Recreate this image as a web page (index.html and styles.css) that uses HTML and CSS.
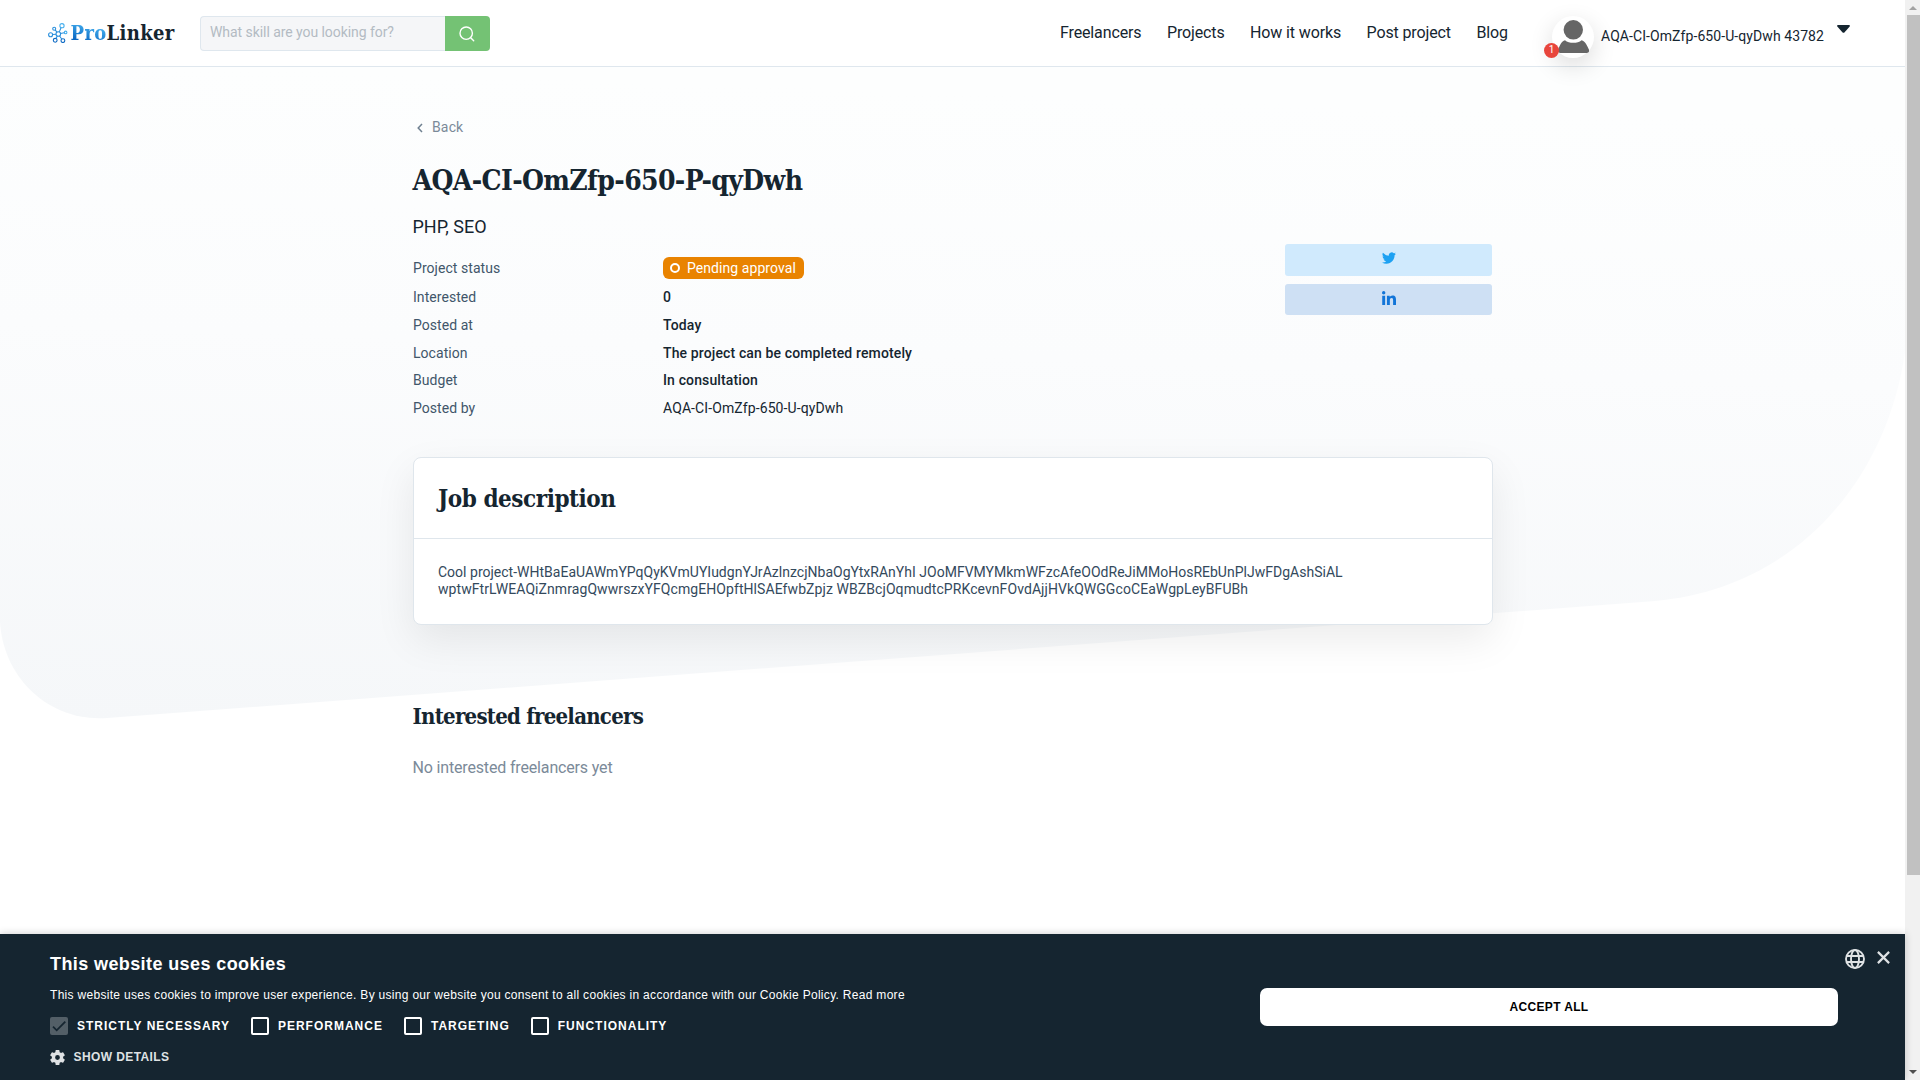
FILE: index.html
```html
<!DOCTYPE html>
<html lang="en">
<head>
<meta charset="utf-8">
<title>AQA-CI-OmZfp-650-P-qyDwh | ProLinker</title>
<link rel="stylesheet" href="styles.css">
</head>
<body>
<div class="page">
  <svg class="backdrop" viewBox="0 0 1905 720" aria-hidden="true">
    <defs><linearGradient id="shade" x1="0.1" y1="0" x2="0" y2="1"><stop offset="0" stop-color="#fdfefe"/><stop offset=".4" stop-color="#fbfcfd"/><stop offset="1" stop-color="#f5f7f9"/></linearGradient></defs>
    <path fill="url(#shade)" d="M0 66H1905V352C1887 478 1798 588 1655 601L107 718C47 722 3 676 0 622Z"/>
  </svg>
  <header class="header">
    <a class="logo">
      <svg class="logo-mark" viewBox="0 0 20 20" fill="none" stroke="#2a8fdc" stroke-width="1.1">
        <circle cx="10.3" cy="11" r="2.3"/><circle cx="2.6" cy="11.7" r="2"/><circle cx="6.2" cy="5.7" r="1.5"/><circle cx="14" cy="2.7" r="2.1" stroke="#48b0ee"/><circle cx="17.6" cy="9.4" r="1.3" stroke="#48b0ee"/><circle cx="7.2" cy="17.3" r="1.9" stroke="#0e6ac4"/><circle cx="14.9" cy="17.6" r="1.9" stroke="#0e6ac4"/>
        <path d="M4.6 11.5 8 11.2M7.1 6.9 9 9.1M13.1 4.6 11.3 8.9M16.3 9.7 12.5 10.5M9.3 13.1 8 15.5M11.6 13 13.7 16"/>
      </svg>
      <span class="logo-text"><span class="logo-pro">Pro</span><span class="logo-linker">Linker</span></span>
    </a>
    <div class="search">
      <div class="search-input">What skill are you looking for?</div>
      <div class="search-button"><svg width="16" height="16" viewBox="0 0 16 16" fill="none" stroke="#fff" stroke-width="1.4" stroke-linecap="round"><circle cx="7.2" cy="7.2" r="6.2"/><path d="m11.7 11.7 3 3"/></svg></div>
    </div>
    <nav class="nav"><a>Freelancers</a><a>Projects</a><a>How it works</a><a>Post project</a><a>Blog</a></nav>
    <div class="user">
      <div class="avatar">
        <svg width="31" height="34" viewBox="0 0 31 34" fill="#666"><circle cx="15.3" cy="9.8" r="9.7"/><path d="M7 20.2C11 23.7 19.600 23.700 23.600 20.200C27 21 29.300 25.500 31 29.800C31.500 31.700 30.500 33 28.800 33H2.200C.5 33-.5 31.700 0 29.800C1.700 25.500 3.500 21 7 20.200Z"/></svg>
        <span class="count">1</span>
      </div>
      <span class="user-name">AQA-CI-OmZfp-650-U-qyDwh 43782</span>
      <svg class="caret" width="13" height="8" viewBox="0 0 13 8" fill="#152530"><path d="M1 0H12Q13.500.4 12.500 1.700L7.600 7.200Q6.500 8.300 5.400 7.200L.5 1.700Q-.5.4 1 0Z"/></svg>
    </div>
  </header>
  <main class="content">
    <a class="back"><svg width="6" height="10" viewBox="0 0 6 10" fill="none" stroke="#6f8090" stroke-width="1.500"><path d="M5 1 1.200 5 5 9"/></svg>Back</a>
    <h1 class="title">AQA-CI-OmZfp-650-P-qyDwh</h1>
    <p class="skills">PHP, SEO</p>
    <div class="overview">
      <dl class="facts">
        <dt>Project status</dt><dd><span class="status"><i class="ring"></i>Pending approval</span></dd>
        <dt>Interested</dt><dd>0</dd>
        <dt>Posted at</dt><dd>Today</dd>
        <dt>Location</dt><dd>The project can be completed remotely</dd>
        <dt>Budget</dt><dd>In consultation</dd>
        <dt>Posted by</dt><dd class="plain">AQA-CI-OmZfp-650-U-qyDwh</dd>
      </dl>
      <div class="share">
        <a class="twitter"><svg width="14" height="14" viewBox="0 0 24 24" fill="#1da1f2"><path d="M23.950 4.570a10 10 0 0 1-2.820.780 4.960 4.960 0 0 0 2.160-2.730c-.950.560-2 .960-3.130 1.190a4.920 4.920 0 0 0-8.380 4.480A13.980 13.980 0 0 1 1.640 3.160a4.920 4.920 0 0 0 1.520 6.570 4.900 4.900 0 0 1-2.230-.610v.060a4.920 4.920 0 0 0 3.950 4.830 5 5 0 0 1-2.210.080 4.940 4.940 0 0 0 4.600 3.420A9.870 9.870 0 0 1 0 19.540a13.990 13.990 0 0 0 7.550 2.210c9.050 0 14-7.500 14-13.980 0-.210 0-.420-.020-.630a9.940 9.940 0 0 0 2.460-2.550z"/></svg></a>
        <a class="linkedin"><svg width="14" height="14" viewBox="0 0 448 448" fill="#1275d8"><path d="M100 448H7V149h93zM54 108C24 108 0 83 0 54a54 54 0 0 1 108 0c0 29-24 54-54 54zM448 448h-93V302c0-34-1-79-48-79-49 0-56 38-56 77v148h-93V149h89v41h1c13-24 43-49 88-49 94 0 112 62 112 143z"/></svg></a>
      </div>
    </div>
    <section class="card">
      <h2 class="card-title">Job description</h2>
      <p class="card-body"><span class="line">Cool project-WHtBaEaUAWmYPqQyKVmUYIudgnYJrAzlnzcjNbaOgYtxRAnYhI JOoMFVMYMkmWFzcAfeOOdReJiMMoHosREbUnPlJwFDgAshSiAL</span><span class="line loose">wptwFtrLWEAQiZnmragQwwrszxYFQcmgEHOpftHlSAEfwbZpjz WBZBcjOqmudtcPRKcevnFOvdAjjHVkQWGGcoCEaWgpLeyBFUBh</span></p>
    </section>
    <h2 class="subtitle">Interested freelancers</h2>
    <p class="empty">No interested freelancers yet</p>
  </main>
  <section class="cookies">
    <div class="cookie-info">
      <h3 class="cookie-title">This website uses cookies</h3>
      <p class="cookie-text">This website uses cookies to improve user experience. By using our website you consent to all cookies in accordance with our Cookie Policy. <a>Read more</a></p>
      <div class="options">
        <label class="option"><span class="box checked"><svg width="18" height="18" viewBox="0 0 18 18" fill="none" stroke="#152530" stroke-width="1.800"><path d="m3 9.700 3.700 3.600L15.300 4.600"/></svg></span>STRICTLY NECESSARY</label>
        <label class="option"><span class="box"></span>PERFORMANCE</label>
        <label class="option"><span class="box"></span>TARGETING</label>
        <label class="option"><span class="box"></span>FUNCTIONALITY</label>
      </div>
      <div class="details"><svg width="15" height="15" viewBox="2 2 20 20" fill="#dfe2e4"><path d="M19.430 12.980c.040-.320.070-.640.070-.980s-.030-.660-.070-.980l2.110-1.650a.5.5 0 0 0 .120-.640l-2-3.460a.5.5 0 0 0-.610-.220l-2.490 1a7.300 7.300 0 0 0-1.690-.980l-.380-2.650A.49.49 0 0 0 14 2h-4a.49.49 0 0 0-.49.420l-.380 2.650c-.610.250-1.170.590-1.690.980l-2.490-1a.49.49 0 0 0-.610.220l-2 3.460a.49.49 0 0 0 .120.640l2.110 1.650c-.040.320-.070.650-.070.980s.030.660.070.980l-2.110 1.650a.5.5 0 0 0-.120.640l2 3.460c.120.220.390.300.610.220l2.490-1c.520.400 1.080.730 1.690.980l.380 2.650c.030.240.240.420.490.420h4c.250 0 .460-.180.490-.420l.380-2.650c.610-.250 1.170-.590 1.690-.980l2.490 1c.230.090.490 0 .610-.220l2-3.460a.5.5 0 0 0-.120-.640zM12 15.200a3.200 3.200 0 1 1 0-6.400 3.200 3.200 0 0 1 0 6.400z"/></svg>SHOW DETAILS</div>
    </div>
    <div class="accept">ACCEPT ALL</div>
    <div class="cookie-tools">
      <svg width="20" height="20" viewBox="0 0 20 20" fill="none" stroke="#dfe2e4" stroke-width="1.900"><circle cx="10" cy="10" r="9"/><ellipse cx="10" cy="10" rx="4" ry="9"/><path d="M1.500 7H18.500M1.500 13H18.500"/></svg>
      <svg class="close" width="13" height="13" viewBox="0 0 13 13" stroke="#dfe2e4" stroke-width="2.200"><path d="m.9.9 11.200 11.200M12.100.9.9 12.100"/></svg>
    </div>
  </section>
</div>
<aside class="scrollbar"><i class="arrow up"></i><i class="thumb"></i><i class="arrow down"></i></aside>
</body>
</html>
```
FILE: styles.css
```css
* { box-sizing: border-box; }
body { margin: 0; display: flex; height: 1080px; overflow: hidden; background: #fff; color: #152530; font: 14px/17px Roboto, "Liberation Sans", sans-serif; }
h1, h2, h3, p, dl, dd { margin: 0; }
svg { display: block; flex: none; }
.page { position: relative; display: flex; flex-direction: column; width: 1905px; height: 1080px; }
.backdrop { position: absolute; z-index: -1; top: 0; left: 0; width: 1905px; height: 720px; }
.header { display: flex; flex: none; height: 67px; padding: 0 55px 0 48px; background: #fff; border-bottom: 1px solid #dfe7ee; }
.logo { display: flex; width: 152px; padding-top: 23px; }
.logo-mark { width: 20px; height: 20px; }
.logo-text { margin: -3px 0 0 2.5px; font: bold 20px/26px "Roboto Slab", "DejaVu Serif Condensed", "DejaVu Serif", serif; letter-spacing: .35px; white-space: nowrap; }
.logo-pro { color: transparent; background: linear-gradient(15deg, #0a67c2 20%, #48b4f2 80%); background-clip: text; -webkit-background-clip: text; }
.search { display: flex; width: 290px; height: 35px; margin-top: 16px; }
.search-input { width: 245px; padding: 7px 9px; color: #b3bbc3; background: #f5f6f8; border: 1px solid #dfe7ee; border-right: 0; border-radius: 4px 0 0 4px; letter-spacing: -.06px; }
.search-button { display: grid; place-items: center; width: 45px; padding-right: 2px; background: #74c274; border-radius: 0 4px 4px 0; }
.nav { display: flex; gap: 25.5px; margin-left: 570px; padding-top: 23px; font-size: 16px; line-height: 20px; letter-spacing: -.13px; white-space: nowrap; }
.user { display: flex; margin-left: auto; }
.avatar { position: relative; display: flex; justify-content: center; width: 42px; height: 42px; margin-top: 16px; padding-top: 4px; border-radius: 50%; background: #fff; box-shadow: 0 8px 24px rgba(0,0,0,.14); }
.count { position: absolute; left: -8px; bottom: 0; width: 15px; height: 15px; border-radius: 50%; background: #e8453c; color: #fff; font-size: 10px; line-height: 14px; text-align: center; }
.user-name { width: 236px; margin: 28px 0 0 7px; letter-spacing: .08px; white-space: nowrap; }
.caret { margin-top: 25px; }
.content { width: 1080px; margin: 0 auto; }
.back { display: flex; align-items: center; gap: 9px; margin-top: 52px; padding-left: 4.5px; height: 17px; color: #7b8a99; letter-spacing: .15px; }
.title, .card-title, .subtitle { font-family: "Roboto Slab", "DejaVu Serif Condensed", "DejaVu Serif", serif; font-weight: bold; white-space: nowrap; }
.title { margin-top: 26px; font-size: 28px; line-height: 38px; letter-spacing: -.62px; }
.skills { margin-top: 16px; font-size: 18px; line-height: 22px; }
.overview { display: flex; justify-content: space-between; margin-top: 16px; }
.facts { display: grid; grid-template-columns: 250px 400px; grid-template-rows: 30px repeat(5, 27.8px); padding-left: .5px; line-height: 27.8px; white-space: nowrap; }
.facts dt { color: #41566a; letter-spacing: .05px; }
.facts dd { font-weight: 500; letter-spacing: .13px; }
.facts dt:first-of-type { line-height: 29px; }
.facts .plain { font-weight: 400; letter-spacing: .1px; }
.status { display: flex; align-items: center; gap: 7px; width: 141px; height: 22px; margin-top: 3px; padding: 0 7px; background: #e98300; color: #fff; font-weight: 400; line-height: 20px; border-radius: 6px; letter-spacing: .07px; }
.ring { width: 10px; height: 10px; border: 2px solid #fff; border-radius: 50%; }
.share { display: flex; flex-direction: column; gap: 8px; width: 207px; margin: -10px .5px 0 0; }
.share a { display: flex; justify-content: center; height: 32px; padding-top: 7px; border-radius: 3px; }
.share .twitter { background: #d0eafd; }
.share .linkedin { height: 31px; background: #cee0f4; }
.card { margin-top: 34px; height: 168px; background: #fff; border: 1px solid #dfe6ec; border-radius: 8px; box-shadow: 0 15px 40px rgba(0,0,0,.08); }
.card-title { height: 81px; padding: 25px 24.5px 0; font-size: 24px; line-height: 31px; letter-spacing: -.45px; border-bottom: 1px solid #dfe6ec; }
.card-body { padding: 25px 24.5px; color: #33495c; white-space: nowrap; }
.line { display: block; letter-spacing: .01px; }
.line.loose { letter-spacing: .078px; }
.subtitle { margin-top: 76px; font-size: 22px; line-height: 30px; letter-spacing: -.75px; }
.empty { margin-top: 27px; color: #7b8a99; font-size: 16px; line-height: 20px; letter-spacing: -.16px; }
.cookies { position: absolute; left: 0; bottom: 0; display: flex; width: 1905px; height: 146px; padding-left: 50px; background: #152530; color: #fff; font: 12px/16px "Liberation Sans", Arial, sans-serif; box-shadow: 0 0 8px rgba(0,0,0,.2); }
.cookie-info { width: 1210px; padding-top: 18px; white-space: nowrap; }
.cookie-title { font-size: 18px; line-height: 24px; letter-spacing: .4px; }
.cookie-text { margin-top: 11px; line-height: 16px; letter-spacing: .3px; }
.options { display: flex; gap: 21px; margin-top: 14px; }
.option { display: flex; align-items: center; gap: 9px; height: 18px; font-weight: bold; letter-spacing: 1px; }
.box { width: 18px; height: 18px; border: 2px solid #fff; border-radius: 2px; }
.box.checked { border: 0; background: #535f67; }
.details { display: flex; align-items: center; gap: 8.5px; margin-top: 14px; color: #dfe2e4; font-weight: bold; letter-spacing: .4px; }
.accept { width: 578px; height: 38px; margin-top: 54px; background: #fff; color: #000; border-radius: 7px; font-weight: bold; line-height: 38px; letter-spacing: .35px; text-align: center; }
.cookie-tools { display: flex; gap: 12px; margin-left: 7px; padding-top: 15px; }
.close { margin-top: 2px; }
.scrollbar { display: flex; flex-direction: column; justify-content: space-between; width: 15px; height: 1080px; background: #f1f1f1; }
.arrow { align-self: center; width: 0; height: 0; border: 4px solid transparent; }
.arrow.up { margin-top: 2px; border-bottom-color: #a3a3a3; }
.arrow.down { margin-bottom: 2px; border-top-color: #505050; }
.thumb { width: 13px; height: 860px; margin: 5px 0 auto 2px; background: #c1c1c1; }
```
